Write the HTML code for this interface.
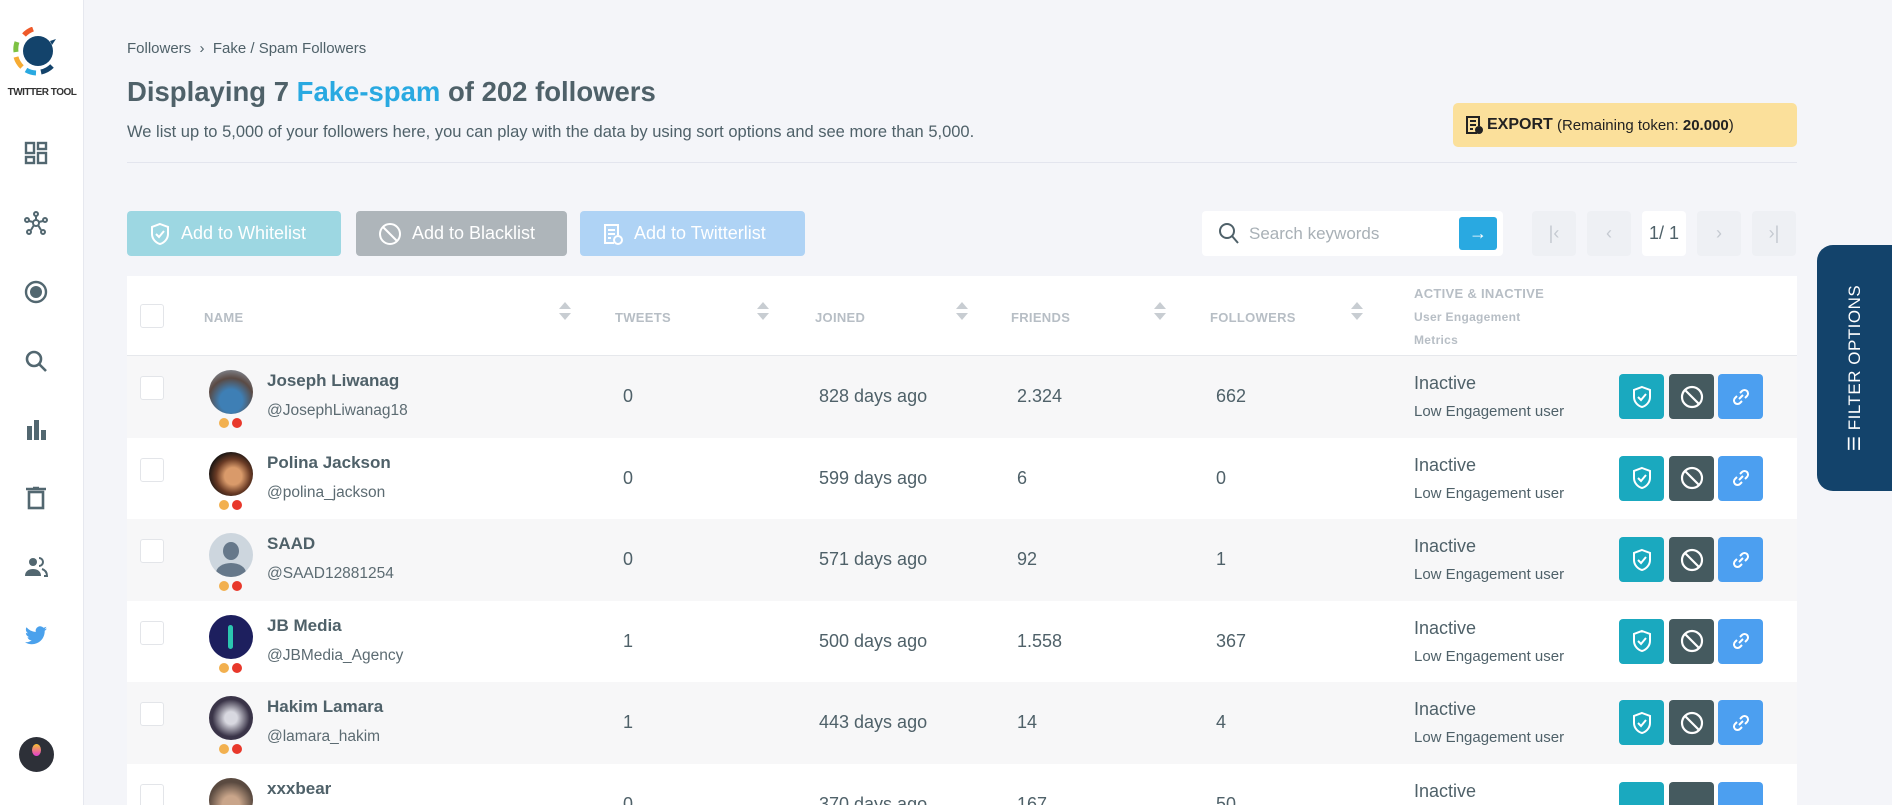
<!DOCTYPE html>
<html><head><meta charset="utf-8"><style>
*{box-sizing:border-box;margin:0;padding:0}
html{width:1892px;height:805px;overflow:hidden}
body{width:1892px;height:805px;overflow:hidden;background:#f4f5f9;font-family:"Liberation Sans",sans-serif;color:#4f6169;position:relative}
.abs{position:absolute}
.side{position:absolute;left:0;top:0;width:84px;height:805px;background:#fff;border-right:1px solid #e6e8ef}
.nav{position:absolute;left:24px;width:24px;height:24px}
.btn{position:absolute;top:211px;height:45px;border-radius:4px;color:#fff;font-size:18px;display:flex;align-items:center;padding-left:22px;gap:10px}
.pg{position:absolute;top:211px;width:44px;height:45px;border-radius:4px;background:#eef0f4;color:#c5cad1;font-size:18px;display:flex;align-items:center;justify-content:center}
.table{position:absolute;left:127px;top:276px;width:1670px;height:529px;background:#fff;overflow:hidden}
.hd{position:absolute;top:34px;font-size:13px;font-weight:bold;color:#b7bec5;letter-spacing:.3px}
.sort{position:absolute;top:26px;width:10px}
.sort:before{content:"";position:absolute;left:0;top:0;border:6px solid transparent;border-bottom:7px solid #c8cdd2;border-top:0}
.sort:after{content:"";position:absolute;left:0;top:11px;border:6px solid transparent;border-top:7px solid #c8cdd2;border-bottom:0}
.row{position:absolute;left:0;width:1670px;height:81.5px}
.row.g{background:#f7f7f8}
.cb{position:absolute;left:13px;top:20px;width:24px;height:24px;border:1px solid #e3e5e9;border-radius:3px;background:#fff}
.av{position:absolute;left:82px;top:14px;width:44px;height:44px;border-radius:50%}
.d1,.d2{position:absolute;top:62px;width:10px;height:10px;border-radius:50%}
.d1{left:92px;background:#f2b04f}.d2{left:105px;background:#e8382b}
.nm{position:absolute;left:140px;top:15px;font-size:17px;font-weight:bold;color:#4f6169}
.hn{position:absolute;left:140px;top:46px;font-size:15.5px;color:#5c6b72}
.v{position:absolute;top:30px;font-size:18px;color:#4f6169}
.st{position:absolute;left:1287px;top:17px;font-size:18px}
.le{position:absolute;left:1287px;top:47px;font-size:15px}
.ab{position:absolute;top:18px;width:45px;height:45px;border-radius:4px;display:flex;align-items:center;justify-content:center}
</style></head><body>
<div class="side">
<svg class="abs" style="left:12px;top:27px" width="50" height="50" viewBox="0 0 50 50">
<circle cx="26" cy="24" r="15" fill="#13436b"/><path d="M38 14l6-2-4 6z" fill="#13436b"/>
<path d="M12 8a22 22 0 0 1 9-6" stroke="#ef5a2a" stroke-width="5" fill="none"/>
<path d="M5 15a22 22 0 0 0 -1 10" stroke="#7dc142" stroke-width="5" fill="none"/>
<path d="M4 30a22 22 0 0 0 6 10" stroke="#f6ab33" stroke-width="5" fill="none"/>
<path d="M14 43a22 22 0 0 0 10 3" stroke="#29a9e1" stroke-width="5" fill="none"/>
<path d="M29 45a22 22 0 0 0 11-6" stroke="#13436b" stroke-width="5" fill="none"/>
</svg>
<div class="abs" style="left:0;width:84px;top:87px;text-align:center;font-size:10px;font-weight:bold;color:#333;letter-spacing:-.5px">TWITTER TOOL</div>
<svg class="nav" style="top:141px" viewBox="0 0 24 24" fill="none" stroke="#526770" stroke-width="2.4"><rect x="2" y="2" width="8" height="10"/><rect x="14" y="2" width="8" height="6"/><rect x="2" y="16" width="8" height="6"/><rect x="14" y="12" width="8" height="10"/></svg>
<svg class="nav" style="top:211px" viewBox="0 0 24 24" fill="none" stroke="#526770" stroke-width="2"><circle cx="12" cy="12" r="3"/><circle cx="12" cy="3" r="2"/><circle cx="3" cy="9" r="2"/><circle cx="21" cy="9" r="2"/><circle cx="5" cy="21" r="2"/><circle cx="19" cy="21" r="2"/><path d="M12 5v4M5 10l4 1M19 10l-4 1M7 19l3-5M17 19l-3-5"/></svg>
<svg class="nav" style="top:280px" viewBox="0 0 24 24"><circle cx="12" cy="12" r="10" fill="none" stroke="#526770" stroke-width="2.4"/><circle cx="12" cy="12" r="6" fill="#526770"/></svg>
<svg class="nav" style="top:349px" viewBox="0 0 24 24" fill="none" stroke="#526770" stroke-width="2.6"><circle cx="10" cy="10" r="7"/><path d="M15 15l7 7"/></svg>
<svg class="nav" style="top:418px" viewBox="0 0 24 24" fill="#526770"><rect x="3" y="8" width="5" height="14"/><rect x="10" y="2" width="5" height="20"/><rect x="17" y="12" width="5" height="10"/></svg>
<svg class="nav" style="top:486px" viewBox="0 0 24 24" fill="none" stroke="#526770" stroke-width="2.6"><path d="M2 3h20M9 2h6"/><rect x="5" y="6" width="14" height="16"/></svg>
<svg class="nav" style="top:555px" viewBox="0 0 24 24" fill="#526770"><circle cx="9" cy="7" r="4"/><path d="M1 21c0-5 4-7 8-7s8 2 8 7z"/><path d="M15 3a4 4 0 0 1 0 8M18 14c3 1 5 3 5 7h-3" fill="none" stroke="#526770" stroke-width="2"/></svg>
<svg class="nav" style="top:624px" viewBox="0 0 24 24" fill="#4aa1ec"><path d="M23 4.5c-.8.4-1.7.6-2.6.7.9-.6 1.6-1.4 2-2.5-.9.5-1.9.9-2.9 1.1A4.5 4.5 0 0 0 11.8 8 12.8 12.8 0 0 1 2.5 3.3a4.5 4.5 0 0 0 1.4 6c-.7 0-1.4-.2-2-.6 0 2.200 1.600 4 3.600 4.400-.7.2-1.4.2-2 .1.6 1.8 2.2 3.1 4.2 3.1A9 9 0 0 1 1 18.2 12.8 12.8 0 0 0 7.9 20.2c8.3 0 12.8-6.9 12.8-12.8v-.6c.9-.6 1.6-1.4 2.3-2.3z"/></svg>
<div class="abs" style="left:19px;top:737px;width:35px;height:35px;border-radius:50%;background:#2d3038"><div class="abs" style="left:13px;top:7px;width:9px;height:12px;border-radius:50%;background:linear-gradient(#f6c030,#e33bd0)"></div></div>
</div>

<div class="abs" style="left:127px;top:40px;font-size:15px;color:#4f6169">Followers &nbsp;›&nbsp; Fake / Spam Followers</div>
<div class="abs" style="left:127px;top:76px;font-size:27.5px;font-weight:bold;color:#4f6169">Displaying 7 <span style="color:#29a9e1">Fake-spam</span> of 202 followers</div>
<div class="abs" style="left:127px;top:123px;font-size:16.5px;color:#4f6169">We list up to 5,000 of your followers here, you can play with the data by using sort options and see more than 5,000.</div>
<div class="abs" style="left:127px;top:162px;width:1670px;height:1px;background:#e3e5ee"></div>
<div class="abs" style="left:1453px;top:103px;width:344px;height:44px;background:#fbe09b;border-radius:5px;display:flex;align-items:center;padding-left:12px;font-size:15px;color:#222">
<svg width="18" height="20" viewBox="0 0 18 20" fill="none" stroke="#222" stroke-width="2"><path d="M12 18H2V2h12v9"/><path d="M5 6h6M5 10h6M5 14h3"/><circle cx="14" cy="15" r="3" fill="#222"/></svg>
<b style="margin-left:4px;font-size:16px">EXPORT</b>&nbsp;(Remaining token: <b>&nbsp;20.000</b>)</div>

<div class="btn" style="left:127px;width:214px;background:#9dd7e2"><svg width="22" height="24" viewBox="0 0 22 24" fill="none" stroke="#fff" stroke-width="2"><path d="M11 2l8 3v7c0 5-4 9-8 10-4-1-8-5-8-10V5z"/><path d="M7 12l3 3 5-6"/></svg>Add to Whitelist</div>
<div class="btn" style="left:356px;width:211px;background:#aeb5ba"><svg width="24" height="24" viewBox="0 0 24 24" fill="none" stroke="#fff" stroke-width="2"><circle cx="12" cy="12" r="10"/><path d="M5 5l14 14"/></svg>Add to Blacklist</div>
<div class="btn" style="left:580px;width:225px;background:#afd3f5"><svg width="22" height="24" viewBox="0 0 22 24" fill="none" stroke="#fff" stroke-width="2"><path d="M12 21H3V3h13v10"/><path d="M6 8h7M6 12h7M6 16h3"/><circle cx="16" cy="18" r="4"/></svg>Add to Twitterlist</div>

<div class="abs" style="left:1202px;top:211px;width:301px;height:45px;background:#fff;border-radius:4px">
<svg class="abs" style="left:16px;top:11px" width="22" height="22" viewBox="0 0 22 22" fill="none" stroke="#4f6169" stroke-width="2"><circle cx="9" cy="9" r="7"/><path d="M14 14l6 7"/></svg>
<div class="abs" style="left:47px;top:13px;font-size:17px;color:#a8b0b6">Search keywords</div>
<div class="abs" style="left:257px;top:6px;width:38px;height:33px;background:#29a9e1;border-radius:3px;color:#fff;font-size:18px;text-align:center;line-height:32px">→</div>
</div>
<div class="pg" style="left:1532px">|‹</div><div class="pg" style="left:1587px">‹</div>
<div class="pg" style="left:1642px;background:#fff;color:#4f6169">1/ 1</div>
<div class="pg" style="left:1697px">›</div><div class="pg" style="left:1752px">›|</div>

<div class="abs" style="left:1817px;top:245px;width:75px;height:246px;background:#13436b;border-radius:16px 0 0 16px">
<div class="abs" style="left:38px;top:123px;transform:translate(-50%,-50%) rotate(-90deg);white-space:nowrap;color:#fff;font-size:17px;letter-spacing:.5px">☰ FILTER OPTIONS</div></div>

<div class="table">
<div class="cb" style="top:28px"></div>
<div class="hd" style="left:77px">NAME</div><div class="sort" style="left:432px"></div>
<div class="hd" style="left:488px">TWEETS</div><div class="sort" style="left:630px"></div>
<div class="hd" style="left:688px">JOINED</div><div class="sort" style="left:829px"></div>
<div class="hd" style="left:884px">FRIENDS</div><div class="sort" style="left:1027px"></div>
<div class="hd" style="left:1083px">FOLLOWERS</div><div class="sort" style="left:1224px"></div>
<div class="hd" style="left:1287px;top:10px">ACTIVE &amp; INACTIVE</div>
<div class="hd" style="left:1287px;top:34px;font-size:12px">User Engagement</div>
<div class="hd" style="left:1287px;top:57px;font-size:12px">Metrics</div>
<div class="abs" style="left:0;top:79px;width:1670px;height:1px;background:#e6e8ec"></div>

<div class="row g" style="top:80px"><div class="cb"></div><div class="av" style="background:radial-gradient(circle at 50% 70%,#3e7fb5 30%,#5a4a44 60%,#9ab 100%)"></div><div class="d1"></div><div class="d2"></div><div class="nm">Joseph Liwanag</div><div class="hn">@JosephLiwanag18</div><div class="v" style="left:496px">0</div><div class="v" style="left:692px">828 days ago</div><div class="v" style="left:890px">2.324</div><div class="v" style="left:1089px">662</div><div class="st">Inactive</div><div class="le">Low Engagement user</div>
<div class="ab" style="left:1492px;background:#1aa9bf"><svg width="22" height="24" viewBox="0 0 22 24" fill="none" stroke="#fff" stroke-width="2"><path d="M11 2l8 3v7c0 5-4 9-8 10-4-1-8-5-8-10V5z"/><path d="M7 12l3 3 5-6"/></svg></div><div class="ab" style="left:1542px;background:#455a5f"><svg width="24" height="24" viewBox="0 0 24 24" fill="none" stroke="#fff" stroke-width="2.2"><circle cx="12" cy="12" r="10"/><path d="M5 5l14 14"/></svg></div><div class="ab" style="left:1591px;background:#4c9ff0"><svg width="18" height="18" viewBox="0 0 18 18" fill="none" stroke="#fff" stroke-width="2"><path d="M8 5l2-2a3 3 0 0 1 5 5l-2 2M10 13l-2 2a3 3 0 0 1-5-5l2-2M7 11l4-4"/></svg></div></div>

<div class="row" style="top:161.5px"><div class="cb"></div><div class="av" style="background:radial-gradient(circle at 55% 55%,#d99a6a 25%,#6a3b25 50%,#111 75%)"></div><div class="d1"></div><div class="d2"></div><div class="nm">Polina Jackson</div><div class="hn">@polina_jackson</div><div class="v" style="left:496px">0</div><div class="v" style="left:692px">599 days ago</div><div class="v" style="left:890px">6</div><div class="v" style="left:1089px">0</div><div class="st">Inactive</div><div class="le">Low Engagement user</div>
<div class="ab" style="left:1492px;background:#1aa9bf"><svg width="22" height="24" viewBox="0 0 22 24" fill="none" stroke="#fff" stroke-width="2"><path d="M11 2l8 3v7c0 5-4 9-8 10-4-1-8-5-8-10V5z"/><path d="M7 12l3 3 5-6"/></svg></div><div class="ab" style="left:1542px;background:#455a5f"><svg width="24" height="24" viewBox="0 0 24 24" fill="none" stroke="#fff" stroke-width="2.2"><circle cx="12" cy="12" r="10"/><path d="M5 5l14 14"/></svg></div><div class="ab" style="left:1591px;background:#4c9ff0"><svg width="18" height="18" viewBox="0 0 18 18" fill="none" stroke="#fff" stroke-width="2"><path d="M8 5l2-2a3 3 0 0 1 5 5l-2 2M10 13l-2 2a3 3 0 0 1-5-5l2-2M7 11l4-4"/></svg></div></div>

<div class="row g" style="top:243px"><div class="cb"></div><div class="av" style="background:#cdd6de;overflow:hidden"><div class="abs" style="left:14px;top:9px;width:16px;height:18px;border-radius:50%;background:#66788a"></div><div class="abs" style="left:7px;top:30px;width:30px;height:20px;border-radius:50%;background:#66788a"></div></div><div class="d1"></div><div class="d2"></div><div class="nm">SAAD</div><div class="hn">@SAAD12881254</div><div class="v" style="left:496px">0</div><div class="v" style="left:692px">571 days ago</div><div class="v" style="left:890px">92</div><div class="v" style="left:1089px">1</div><div class="st">Inactive</div><div class="le">Low Engagement user</div>
<div class="ab" style="left:1492px;background:#1aa9bf"><svg width="22" height="24" viewBox="0 0 22 24" fill="none" stroke="#fff" stroke-width="2"><path d="M11 2l8 3v7c0 5-4 9-8 10-4-1-8-5-8-10V5z"/><path d="M7 12l3 3 5-6"/></svg></div><div class="ab" style="left:1542px;background:#455a5f"><svg width="24" height="24" viewBox="0 0 24 24" fill="none" stroke="#fff" stroke-width="2.2"><circle cx="12" cy="12" r="10"/><path d="M5 5l14 14"/></svg></div><div class="ab" style="left:1591px;background:#4c9ff0"><svg width="18" height="18" viewBox="0 0 18 18" fill="none" stroke="#fff" stroke-width="2"><path d="M8 5l2-2a3 3 0 0 1 5 5l-2 2M10 13l-2 2a3 3 0 0 1-5-5l2-2M7 11l4-4"/></svg></div></div>

<div class="row" style="top:324.5px"><div class="cb"></div><div class="av" style="background:#1d1f5e"><div class="abs" style="left:19px;top:10px;width:5px;height:24px;border-radius:3px;background:#2bc6b0"></div></div><div class="d1"></div><div class="d2"></div><div class="nm">JB Media</div><div class="hn">@JBMedia_Agency</div><div class="v" style="left:496px">1</div><div class="v" style="left:692px">500 days ago</div><div class="v" style="left:890px">1.558</div><div class="v" style="left:1089px">367</div><div class="st">Inactive</div><div class="le">Low Engagement user</div>
<div class="ab" style="left:1492px;background:#1aa9bf"><svg width="22" height="24" viewBox="0 0 22 24" fill="none" stroke="#fff" stroke-width="2"><path d="M11 2l8 3v7c0 5-4 9-8 10-4-1-8-5-8-10V5z"/><path d="M7 12l3 3 5-6"/></svg></div><div class="ab" style="left:1542px;background:#455a5f"><svg width="24" height="24" viewBox="0 0 24 24" fill="none" stroke="#fff" stroke-width="2.2"><circle cx="12" cy="12" r="10"/><path d="M5 5l14 14"/></svg></div><div class="ab" style="left:1591px;background:#4c9ff0"><svg width="18" height="18" viewBox="0 0 18 18" fill="none" stroke="#fff" stroke-width="2"><path d="M8 5l2-2a3 3 0 0 1 5 5l-2 2M10 13l-2 2a3 3 0 0 1-5-5l2-2M7 11l4-4"/></svg></div></div>

<div class="row g" style="top:406px"><div class="cb"></div><div class="av" style="background:radial-gradient(circle at 50% 50%,#d8d8e0 20%,#3a3448 60%)"></div><div class="d1"></div><div class="d2"></div><div class="nm">Hakim Lamara</div><div class="hn">@lamara_hakim</div><div class="v" style="left:496px">1</div><div class="v" style="left:692px">443 days ago</div><div class="v" style="left:890px">14</div><div class="v" style="left:1089px">4</div><div class="st">Inactive</div><div class="le">Low Engagement user</div>
<div class="ab" style="left:1492px;background:#1aa9bf"><svg width="22" height="24" viewBox="0 0 22 24" fill="none" stroke="#fff" stroke-width="2"><path d="M11 2l8 3v7c0 5-4 9-8 10-4-1-8-5-8-10V5z"/><path d="M7 12l3 3 5-6"/></svg></div><div class="ab" style="left:1542px;background:#455a5f"><svg width="24" height="24" viewBox="0 0 24 24" fill="none" stroke="#fff" stroke-width="2.2"><circle cx="12" cy="12" r="10"/><path d="M5 5l14 14"/></svg></div><div class="ab" style="left:1591px;background:#4c9ff0"><svg width="18" height="18" viewBox="0 0 18 18" fill="none" stroke="#fff" stroke-width="2"><path d="M8 5l2-2a3 3 0 0 1 5 5l-2 2M10 13l-2 2a3 3 0 0 1-5-5l2-2M7 11l4-4"/></svg></div></div>

<div class="row" style="top:487.5px"><div class="cb"></div><div class="av" style="background:radial-gradient(circle at 50% 60%,#c9a58a 25%,#5a4a40 65%)"></div><div class="nm">xxxbear</div><div class="v" style="left:496px">0</div><div class="v" style="left:692px">370 days ago</div><div class="v" style="left:890px">167</div><div class="v" style="left:1089px">50</div><div class="st">Inactive</div>
<div class="ab" style="left:1492px;background:#1aa9bf"></div><div class="ab" style="left:1542px;background:#455a5f"></div><div class="ab" style="left:1591px;background:#4c9ff0"></div></div>
</div>
</body></html>
